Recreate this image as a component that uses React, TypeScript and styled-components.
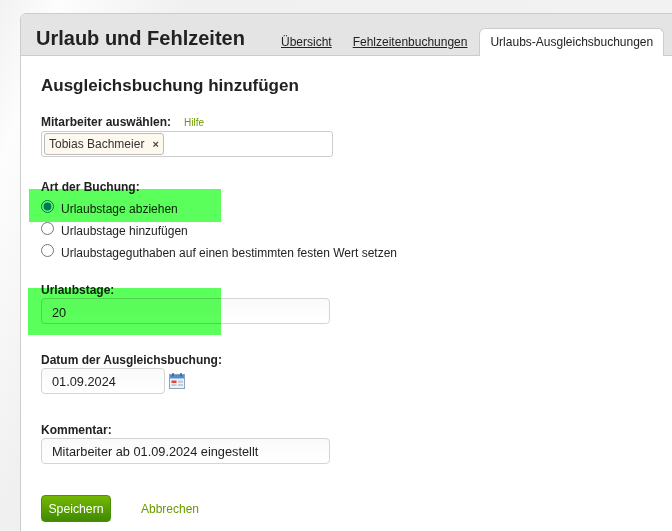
import React from "react";
import styled, { createGlobalStyle } from "styled-components";

const Global = createGlobalStyle`
  html, body { margin: 0; padding: 0; height: 100%; overflow: hidden; }
  body {
    font-family: "Liberation Sans", Arial, sans-serif;
    color: #222;
    background: linear-gradient(110deg, #f2f2f2 0%, #fdfdfd 7%, #f0f0f0 22%, #f3f3f3 100%);
  }
`;

const Page = styled.div`
  position: relative;
  width: 672px;
  height: 531px;
  overflow: hidden;
  padding: 13px 0 0 20px;
  box-sizing: border-box;
`;

const Card = styled.div`
  width: 700px;
  height: 560px;
  background: #fff;
  border: 1px solid #ccc;
  border-radius: 6px 0 0 0;
  box-sizing: border-box;
`;

const Header = styled.div`
  display: flex;
  align-items: flex-end;
  height: 41px;
  background: #e4e4e4;
  border-bottom: 1px solid #ccc;
  border-radius: 5px 0 0 0;
  padding-left: 15px;
  box-sizing: content-box;
`;

const Title = styled.h1`
  margin: 0;
  width: 245px;
  align-self: flex-start;
  padding-top: 13px;
  font-size: 20px;
  line-height: 23px;
  font-weight: 700;
  color: #222;
  white-space: nowrap;
`;

const Tab = styled.a`
  display: block;
  margin-right: 21px;
  padding-bottom: 5px;
  font-size: 12px;
  line-height: 15px;
  color: #222;
  text-decoration: underline;
  white-space: nowrap;
`;

const ActiveTab = styled.a`
  display: block;
  margin: 0 0 -1px -9px;
  padding: 6px 10px 6px;
  font-size: 12px;
  line-height: 15px;
  color: #222;
  background: #fff;
  border: 1px solid #ccc;
  border-bottom: none;
  border-radius: 6px 6px 0 0;
  white-space: nowrap;
`;

const Body = styled.div`
  padding: 20px 0 0 20px;
`;

const Heading = styled.h2`
  margin: 0 0 18px;
  font-size: 17px;
  line-height: 20px;
  font-weight: 700;
  color: #222;
  white-space: nowrap;
`;

const Field = styled.div<{ $gap: number }>`
  margin-bottom: ${(p) => p.$gap}px;
`;

const LabelRow = styled.div`
  display: flex;
  align-items: baseline;
  gap: 13px;
  height: 17px;
`;

const Label = styled.label`
  display: block;
  font-size: 12px;
  line-height: 16px;
  font-weight: 700;
  color: #222;
  white-space: nowrap;
`;

const Help = styled.a`
  font-size: 10px;
  color: #6a9a00;
`;

const TagBox = styled.div`
  display: flex;
  align-items: center;
  width: 292px;
  height: 26px;
  box-sizing: border-box;
  padding-left: 2px;
  background: #fff;
  border: 1px solid #ccc;
  border-radius: 3px;
`;

const Tag = styled.span`
  display: flex;
  align-items: center;
  gap: 8px;
  height: 22px;
  box-sizing: border-box;
  padding: 0 4px 0 4px;
  background: #fdf9ef;
  border: 1px solid #bbb;
  border-radius: 3px;
  font-size: 12px;
  color: #333;
  white-space: nowrap;
`;

const TagClose = styled.span`
  font-size: 11px;
  font-weight: 700;
  color: #444;
`;

const RadioGroup = styled.div`
  display: flex;
  flex-direction: column;
  margin-top: 3px;
`;

const RadioRow = styled.label`
  display: flex;
  align-items: center;
  height: 22px;
  font-size: 12px;
  color: #222;
  white-space: nowrap;
`;

const Radio = styled.input`
  width: 13px;
  height: 13px;
  margin: 0 7px 6px 0;
`;

const TextInput = styled.input<{ $w: number; $low?: boolean }>`
  display: block;
  width: ${(p) => p.$w}px;
  height: 26px;
  box-sizing: border-box;
  padding: ${(p) => (p.$low ? "3px" : "0")} 10px 0;
  background: linear-gradient(to bottom, #fafafa, #fff);
  border: 1px solid #d4d4d4;
  border-radius: 4px;
  font-family: inherit;
  font-size: 12.75px;
  color: #222;
`;

const DateRow = styled.div`
  display: flex;
  align-items: center;
  gap: 4px;
`;

const Actions = styled.div`
  display: flex;
  align-items: center;
  gap: 30px;
`;

const SaveButton = styled.button`
  width: 70px;
  height: 27px;
  padding: 0;
  background: linear-gradient(to bottom, #74b800, #3f8a00);
  border: 1px solid #4a8f08;
  border-radius: 4px;
  color: #fff;
  font-family: inherit;
  font-size: 12.25px;
`;

const Cancel = styled.a`
  font-size: 12px;
  color: #6a9a00;
`;

const Highlight = styled.div<{ $x: number; $y: number; $w: number; $h: number }>`
  position: absolute;
  left: ${(p) => p.$x}px;
  top: ${(p) => p.$y}px;
  width: ${(p) => p.$w}px;
  height: ${(p) => p.$h}px;
  background: #5bff5b;
  mix-blend-mode: multiply;
`;

const CalendarIcon = () => (
  <svg width="16" height="16" viewBox="0 0 16 16">
    <rect x="0.5" y="1.5" width="15" height="14" fill="#eef2f8" stroke="#8fa3bd" />
    <rect x="1" y="2" width="14" height="3.5" fill="#4d8fd6" />
    <rect x="3" y="0" width="2" height="3.5" rx="1" fill="#3b6ea8" />
    <rect x="11" y="0" width="2" height="3.5" rx="1" fill="#3b6ea8" />
    <rect x="2.5" y="7.5" width="5" height="2.5" fill="#e2453f" />
    <rect x="2.5" y="11" width="5" height="2" fill="#c3cedb" />
    <rect x="9" y="7.5" width="5" height="2.5" fill="#c3cedb" />
    <rect x="9" y="11" width="5" height="2" fill="#c3cedb" />
  </svg>
);

export default function App() {
  return (
    <Page>
      <Global />
      <Card>
        <Header>
          <Title>Urlaub und Fehlzeiten</Title>
          <Tab>Übersicht</Tab>
          <Tab>Fehlzeitenbuchungen</Tab>
          <ActiveTab>Urlaubs-Ausgleichsbuchungen</ActiveTab>
        </Header>
        <Body>
          <Heading>Ausgleichsbuchung hinzufügen</Heading>
          <Field $gap={22}>
            <LabelRow>
              <Label>Mitarbeiter auswählen:</Label>
              <Help>Hilfe</Help>
            </LabelRow>
            <TagBox>
              <Tag>
                Tobias Bachmeier <TagClose>×</TagClose>
              </Tag>
            </TagBox>
          </Field>
          <Field $gap={18}>
            <Label>Art der Buchung:</Label>
            <RadioGroup>
              <RadioRow>
                <Radio type="radio" name="art" defaultChecked />
                Urlaubstage abziehen
              </RadioRow>
              <RadioRow>
                <Radio type="radio" name="art" />
                Urlaubstage hinzufügen
              </RadioRow>
              <RadioRow>
                <Radio type="radio" name="art" />
                Urlaubstageguthaben auf einen bestimmten festen Wert setzen
              </RadioRow>
            </RadioGroup>
          </Field>
          <Field $gap={28}>
            <Label>Urlaubstage:</Label>
            <TextInput $w={289} $low defaultValue="20" />
          </Field>
          <Field $gap={28}>
            <Label>Datum der Ausgleichsbuchung:</Label>
            <DateRow>
              <TextInput $w={124} defaultValue="01.09.2024" />
              <CalendarIcon />
            </DateRow>
          </Field>
          <Field $gap={31}>
            <Label>Kommentar:</Label>
            <TextInput $w={289} defaultValue="Mitarbeiter ab 01.09.2024 eingestellt" />
          </Field>
          <Actions>
            <SaveButton>Speichern</SaveButton>
            <Cancel>Abbrechen</Cancel>
          </Actions>
        </Body>
      </Card>
      <Highlight $x={29} $y={189} $w={192} $h={33} />
      <Highlight $x={28} $y={288} $w={193} $h={47} />
    </Page>
  );
}
